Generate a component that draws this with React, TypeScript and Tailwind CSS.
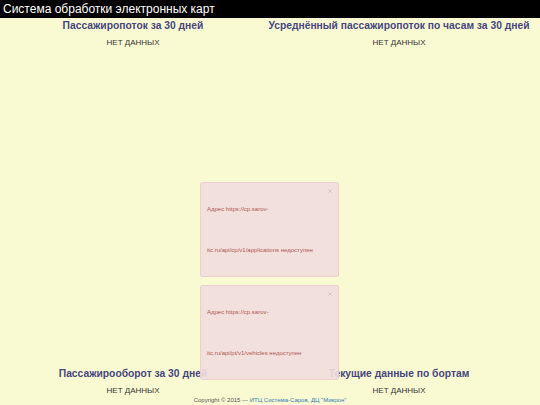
import { X } from "lucide-react";

const font = { fontFamily: '"Liberation Sans", Arial, sans-serif' };

const Panel = ({ title }: { title: string }) => (
  <div className="flex flex-col items-center">
    <h2 className="text-[10.3px] font-bold leading-[14px] text-[#46467f] whitespace-nowrap">{title}</h2>
    <p className="mt-[5px] text-[8px] leading-[10px] text-[#333]">НЕТ ДАННЫХ</p>
  </div>
);

const Alert = ({ lines }: { lines: [string, string] }) => (
  <div className="relative w-[139px] rounded-[2px] border border-[#ebccd1] bg-[#f2dede] px-[6px] pt-[6px] pb-[5px] text-[6px] leading-[41px] text-[#a94442] opacity-90">
    <span className="absolute right-[5px] top-[5px] leading-none text-[#b9a9a9]">
      <X size={6} strokeWidth={2} />
    </span>
    <span className="block whitespace-nowrap">{lines[0]}</span>
    <span className="block whitespace-nowrap">{lines[1]}</span>
  </div>
);

export default function App() {
  return (
    <div className="relative flex h-[405px] w-[540px] flex-col overflow-hidden bg-[#fafad2]" style={font}>
      <header className="h-[18px] bg-black px-[3px] text-[12px] leading-[18px] text-white">
        Система обработки электронных карт
      </header>

      <div className="grid w-[532px] grid-cols-2 pt-[1px]">
        <Panel title="Пассажиропоток за 30 дней" />
        <Panel title="Усреднённый пассажиропоток по часам за 30 дней" />
      </div>

      <div className="flex-1" />

      <div className="grid w-[532px] grid-cols-2">
        <Panel title="Пассажирооборот за 30 дней" />
        <Panel title="Текущие данные по бортам" />
      </div>

      <footer className="pb-[1px] text-center text-[6px] leading-[8px] text-[#555]">
        Copyright © 2015 — <span className="text-[#337ab7]">ИТЦ Система-Саров</span>,{" "}
        <span className="text-[#337ab7]">ДЦ "Микрон"</span>
      </footer>

      <div className="absolute left-[200px] top-[182px] flex flex-col gap-[8px]">
        <Alert lines={["Адрес https://cp.sarov-", "itc.ru/api/cp/v1/applications недоступен"]} />
        <Alert lines={["Адрес https://cp.sarov-", "itc.ru/api/pt/v1/vehicles недоступен"]} />
      </div>
    </div>
  );
}
